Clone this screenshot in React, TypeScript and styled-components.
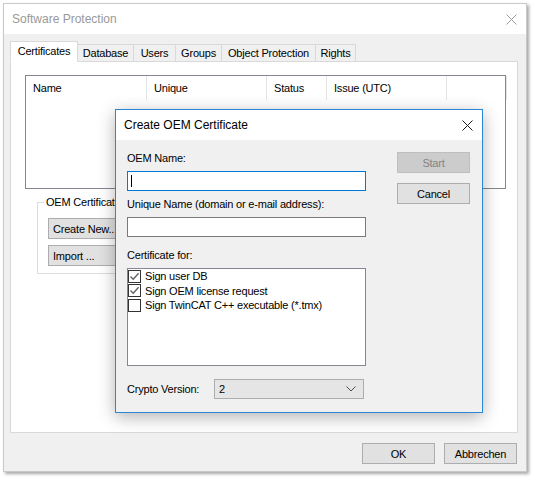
import styled, { createGlobalStyle } from 'styled-components';

const GlobalStyle = createGlobalStyle`
  html, body {
    margin: 0;
    padding: 0;
    background: #ffffff;
  }
  body {
    font-family: "Liberation Sans", Arial, sans-serif;
    font-size: 11px;
    letter-spacing: -0.2px;
    color: #000000;
  }
  * {
    box-sizing: border-box;
  }
`;

const tabs = [
  { label: 'Certificates', width: 68 },
  { label: 'Database', width: 57 },
  { label: 'Users', width: 43 },
  { label: 'Groups', width: 47 },
  { label: 'Object Protection', width: 95 },
  { label: 'Rights', width: 41 },
];

const columns = [
  { label: 'Name', width: 121 },
  { label: 'Unique', width: 120 },
  { label: 'Status', width: 60 },
  { label: 'Issue (UTC)', width: 120 },
  { label: '', width: 60 },
];

const targets = [
  { label: 'Sign user DB', checked: true },
  { label: 'Sign OEM license request', checked: true },
  { label: 'Sign TwinCAT C++ executable (*.tmx)', checked: false },
];

function CloseIcon({ color }: { color: string }) {
  return (
    <svg width="11" height="11" viewBox="0 0 11 11">
      <path d="M0.5 0.5 L10.5 10.5 M10.5 0.5 L0.5 10.5" stroke={color} strokeWidth="1" fill="none" />
    </svg>
  );
}

export default function App() {
  return (
    <Desktop>
      <GlobalStyle />
      <MainWindow>
        <TitleBar $inactive>
          <span>Software Protection</span>
          <CloseButton>
            <CloseIcon color="#9a9a9a" />
          </CloseButton>
        </TitleBar>
        <WindowBody>
          <TabRow>
            {tabs.map((t, i) => (
              <Tab key={t.label} $width={t.width} $active={i === 0}>
                {t.label}
              </Tab>
            ))}
          </TabRow>
          <Panel>
            <ListView>
              <ListHeader>
                {columns.map((c, i) => (
                  <HeaderCell key={i} $width={c.width}>
                    {c.label}
                  </HeaderCell>
                ))}
              </ListHeader>
            </ListView>
            <GroupBox>
              <GroupLabel>OEM Certificate</GroupLabel>
              <GroupButton>Create New...</GroupButton>
              <GroupButton>Import ...</GroupButton>
            </GroupBox>
          </Panel>
          <Footer>
            <PushButton>OK</PushButton>
            <PushButton>Abbrechen</PushButton>
          </Footer>
        </WindowBody>
      </MainWindow>

      <Dialog>
        <TitleBar>
          <span>Create OEM Certificate</span>
          <CloseButton>
            <CloseIcon color="#1a1a1a" />
          </CloseButton>
        </TitleBar>
        <DialogBody>
          <LeftColumn>
            <FieldLabel>OEM Name:</FieldLabel>
            <TextField $focused>
              <Caret />
            </TextField>
            <FieldLabel $gap={7}>Unique Name (domain or e-mail address):</FieldLabel>
            <TextField />
            <FieldLabel $gap={12}>Certificate for:</FieldLabel>
            <CheckList>
              {targets.map((t) => (
                <CheckRow key={t.label}>
                  <CheckBox>
                    {t.checked && (
                      <svg width="11" height="11" viewBox="0 0 11 11">
                        <path d="M1.5 5.5 L4.2 8.3 L9.6 2.2" stroke="#5f5f5f" strokeWidth="1.3" fill="none" />
                      </svg>
                    )}
                  </CheckBox>
                  {t.label}
                </CheckRow>
              ))}
            </CheckList>
            <CryptoRow>
              <CryptoLabel>Crypto Version:</CryptoLabel>
              <Combo>
                <span>2</span>
                <svg width="10" height="6" viewBox="0 0 10 6">
                  <path d="M0.5 0.5 L5 5 L9.5 0.5" stroke="#4d4d4d" strokeWidth="1" fill="none" />
                </svg>
              </Combo>
            </CryptoRow>
          </LeftColumn>
          <RightColumn>
            <PushButton $disabled>Start</PushButton>
            <PushButton>Cancel</PushButton>
          </RightColumn>
        </DialogBody>
      </Dialog>
    </Desktop>
  );
}

const Desktop = styled.div`
  position: relative;
  width: 534px;
  height: 482px;
  overflow: hidden;
  background: #ffffff;
`;

const MainWindow = styled.div`
  position: absolute;
  left: 3px;
  top: 3px;
  width: 524px;
  height: 469px;
  display: flex;
  flex-direction: column;
  background: #f0f0f0;
  border: 1px solid #c9c9c9;
  box-shadow: 2px 2px 3px rgba(0, 0, 0, 0.35);
`;

const TitleBar = styled.div<{ $inactive?: boolean }>`
  height: 30px;
  flex: none;
  display: flex;
  align-items: center;
  justify-content: space-between;
  padding-left: 8px;
  background: #ffffff;
  font-size: 12px;
  letter-spacing: 0;
  color: ${(p) => (p.$inactive ? '#999999' : '#000000')};
`;

const CloseButton = styled.div`
  width: 30px;
  height: 30px;
  display: flex;
  align-items: center;
  justify-content: center;
`;

const WindowBody = styled.div`
  flex: 1;
  display: flex;
  flex-direction: column;
  padding: 7px 8px 0 6px;
`;

const TabRow = styled.div`
  height: 21px;
  display: flex;
  align-items: flex-end;
  position: relative;
  z-index: 1;
  margin-bottom: -1px;
`;

const Tab = styled.div<{ $width: number; $active?: boolean }>`
  width: ${(p) => p.$width}px;
  height: ${(p) => (p.$active ? 21 : 18)}px;
  margin-left: -1px;
  display: flex;
  align-items: center;
  justify-content: center;
  padding-bottom: ${(p) => (p.$active ? 2 : 0)}px;
  background: ${(p) => (p.$active ? '#ffffff' : '#f0f0f0')};
  border: 1px solid #d9d9d9;
  border-bottom-color: ${(p) => (p.$active ? '#ffffff' : '#d9d9d9')};
  z-index: ${(p) => (p.$active ? 2 : 1)};
  &:first-child {
    margin-left: 0;
  }
`;

const Panel = styled.div`
  height: 372px;
  flex: none;
  background: #ffffff;
  border: 1px solid #d9d9d9;
  padding: 13px 11px 0 14px;
`;

const ListView = styled.div`
  height: 114px;
  border: 1px solid #828790;
  background: #ffffff;
`;

const ListHeader = styled.div`
  height: 25px;
  display: flex;
  padding-bottom: 1px;
`;

const HeaderCell = styled.div<{ $width: number }>`
  width: ${(p) => p.$width}px;
  flex: none;
  display: flex;
  align-items: center;
  padding-left: 7px;
  border-right: 1px solid #e5e5e5;
`;

const GroupBox = styled.div`
  position: relative;
  width: 160px;
  height: 72px;
  margin: 13px 0 0 12px;
  padding: 15px 0 0 10px;
  display: flex;
  flex-direction: column;
  gap: 6px;
  border: 1px solid #dcdcdc;
`;

const GroupLabel = styled.span`
  position: absolute;
  top: -7px;
  left: 6px;
  padding: 0 2px;
  line-height: 13px;
  background: #ffffff;
`;

const GroupButton = styled.div`
  width: 100px;
  height: 21px;
  display: flex;
  align-items: center;
  padding-left: 4px;
  background: #e1e1e1;
  border: 1px solid #adadad;
`;

const Footer = styled.div`
  display: flex;
  justify-content: flex-end;
  gap: 9px;
  padding: 10px 1px 0 0;
`;

const PushButton = styled.div<{ $disabled?: boolean }>`
  width: 73px;
  height: 21px;
  display: flex;
  align-items: center;
  justify-content: center;
  background: ${(p) => (p.$disabled ? '#cccccc' : '#e1e1e1')};
  border: 1px solid ${(p) => (p.$disabled ? '#bfbfbf' : '#adadad')};
  color: ${(p) => (p.$disabled ? '#838383' : '#000000')};
`;

const Dialog = styled.div`
  position: absolute;
  left: 115px;
  top: 109px;
  width: 368px;
  height: 304px;
  display: flex;
  flex-direction: column;
  background: #f0f0f0;
  border: 1px solid #2b86d6;
  box-shadow: 0 4px 16px rgba(0, 0, 0, 0.3);
`;

const DialogBody = styled.div`
  flex: 1;
  display: flex;
  gap: 31px;
  padding: 12px 12px 0 11px;
`;

const LeftColumn = styled.div`
  width: 239px;
  display: flex;
  flex-direction: column;
`;

const FieldLabel = styled.div<{ $gap?: number }>`
  line-height: 13px;
  margin-top: ${(p) => p.$gap ?? 0}px;
`;

const TextField = styled.div<{ $focused?: boolean }>`
  height: 20px;
  margin-top: 6px;
  display: flex;
  align-items: center;
  padding-left: 3px;
  background: #ffffff;
  border: 1px solid ${(p) => (p.$focused ? '#0078d7' : '#7a7a7a')};
`;

const Caret = styled.span`
  width: 1px;
  height: 12px;
  background: #000000;
`;

const CheckList = styled.div`
  height: 98px;
  margin-top: 6px;
  background: #ffffff;
  border: 1px solid #828790;
`;

const CheckRow = styled.div`
  height: 14.5px;
  display: flex;
  align-items: center;
  gap: 4px;
  white-space: nowrap;
`;

const CheckBox = styled.span`
  width: 13px;
  height: 13px;
  flex: none;
  display: flex;
  align-items: center;
  justify-content: center;
  background: #ffffff;
  border: 1px solid #333333;
`;

const CryptoRow = styled.div`
  height: 20px;
  margin-top: 13px;
  display: flex;
  align-items: center;
`;

const CryptoLabel = styled.span`
  width: 87px;
  flex: none;
`;

const Combo = styled.div`
  width: 150px;
  height: 20px;
  display: flex;
  align-items: center;
  justify-content: space-between;
  padding: 0 7px 0 4px;
  background: #e5e5e5;
  border: 1px solid #adadad;
`;

const RightColumn = styled.div`
  display: flex;
  flex-direction: column;
  gap: 10px;
`;
